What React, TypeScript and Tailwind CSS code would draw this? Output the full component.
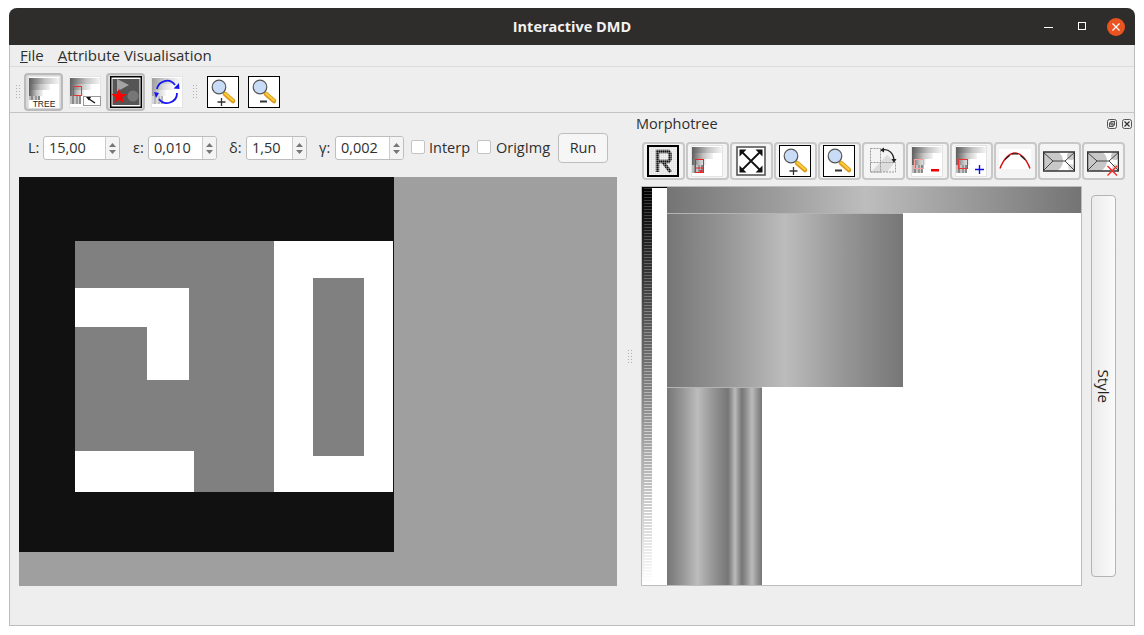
import React from "react";

const font = "font-['Open_Sans','Noto_Sans',sans-serif]";

// gradient stops used by the tree thumbnails and the big morphotree view
const G = ({ id, stops }: { id: string; stops: [number, string][] }) => (
  <linearGradient id={id} x1="0" y1="0" x2="1" y2="0">
    {stops.map(([o, c]) => (
      <stop key={o} offset={o} stopColor={c} />
    ))}
  </linearGradient>
);

function TreeThumb({ id, inner, faded }: { id: string; inner?: React.ReactNode; faded?: boolean }) {
  return (
    <g>
      <defs>
        <G id={id} stops={[[0, "#5e5e5e"], [0.55, "#c4c4c4"], [1, "#f4f4f4"]]} />
      </defs>
      <rect x="0" y="0" width="32" height="32" fill="#e4e4e4" />
      <rect x="1" y="1" width="30" height="30" fill="#fff" />
      <g opacity={faded ? 0.6 : 1}>
        <rect x="1" y="2" width="30" height="6" fill={`url(#${id})`} />
        <rect x="1" y="8" width="21" height="6" fill={`url(#${id})`} />
        <rect x="1" y="14" width="14" height="6" fill={`url(#${id})`} />
        <rect x="1" y="20" width="2" height="8" fill="#bbb" />
        <rect x="3" y="20" width="2" height="8" fill="#888" />
        <rect x="5" y="20" width="2" height="8" fill="#c4c4c4" />
        <rect x="7" y="20" width="2" height="8" fill="#999" />
        <rect x="9" y="20" width="1" height="8" fill="#ccc" />
        <rect x="10" y="20" width="2" height="8" fill="#888" />
      </g>
      {inner}
    </g>
  );
}

function Magnifier({ sign }: { sign: "+" | "-" }) {
  return (
    <svg width="32" height="32" viewBox="0 0 32 32">
      <rect x="0.5" y="0.5" width="31" height="31" fill="#fff" stroke="#000" />
      <line x1="18" y1="18" x2="26" y2="25" stroke="#dd9a1c" strokeWidth="4.5" strokeLinecap="round" />
      <line x1="18" y1="17.5" x2="26" y2="24.5" stroke="#fbd040" strokeWidth="1.8" strokeLinecap="round" />
      <circle cx="12" cy="11" r="6.8" fill="#c8dcf8" stroke="#555" strokeWidth="1.2" />
      {sign === "+" ? (
        <path d="M10.5 26h8M14.5 22v8" stroke="#333" strokeWidth="1.3" />
      ) : (
        <path d="M12 25.5h7" stroke="#333" strokeWidth="2" />
      )}
    </svg>
  );
}

function TreeIcon() {
  return (
    <svg width="32" height="32" viewBox="0 0 32 32">
      <TreeThumb id="t1" />
      <rect x="1" y="24" width="30" height="8" fill="#fff" />
      <text x="16" y="31" textAnchor="middle" fontSize="8.5" fontFamily="Liberation Sans" fill="#222">TREE</text>
    </svg>
  );
}

function TreeSelectIcon() {
  return (
    <svg width="32" height="32" viewBox="0 0 32 32">
      <TreeThumb id="t2" inner={<rect x="4.5" y="10.5" width="8" height="9" fill="none" stroke="#e33" />} />
      <rect x="14.5" y="20.5" width="17" height="9" fill="#fff" stroke="#999" />
      <path d="M20 23l6 4" stroke="#111" strokeWidth="1.3" />
      <path d="M17 21l5 0-2 3.5z" fill="#111" />
    </svg>
  );
}

function ImageStarIcon() {
  return (
    <svg width="32" height="32" viewBox="0 0 32 32">
      <rect x="0.75" y="0.75" width="30.5" height="30.5" fill="#fff" stroke="#000" strokeWidth="1.5" />
      <rect x="2.5" y="3" width="27" height="26" fill="#555" />
      <path d="M7 3l12 6-12 6.5z" fill="#a4a4a4" />
      <circle cx="23" cy="20" r="5.5" fill="#777" />
      <path d="M9 12.5l2 5.5 6 0-4.8 3.5 1.8 5.7-5-3.5-5 3.5 1.8-5.7-4.8-3.5 6 0z" fill="#f00" />
    </svg>
  );
}

function RefreshIcon() {
  return (
    <svg width="32" height="32" viewBox="0 0 32 32">
      <TreeThumb id="t3" faded />
      <path d="M6 13A10 10 0 0 1 24 9M26 17A10 10 0 0 1 8 23" fill="none" stroke="#1414f0" strokeWidth="1.8" />
      <path d="M22.5 12.5l6 .5-.5-6zM3 16l5 1-3 5z" fill="#1414f0" />
    </svg>
  );
}

function RIcon() {
  return (
    <svg width="32" height="32" viewBox="0 0 32 32">
      <defs>
        <pattern id="grid" width="2" height="2" patternUnits="userSpaceOnUse">
          <rect x="1" width="1" height="2" fill="#fff" opacity="0.3" />
          <rect y="1" width="2" height="1" fill="#fff" opacity="0.3" />
        </pattern>
      </defs>
      <rect x="1" y="1" width="30" height="30" fill="#e2e2e2" />
      <path d="M10.5 27V6.5h11l1.5 2v6l-1.5 2H11M16 17l7.5 10" fill="none" stroke="#111" strokeWidth="3.4" />
      <rect x="1" y="1" width="30" height="30" fill="url(#grid)" stroke="#000" strokeWidth="2" />
    </svg>
  );
}

function PathIcon() {
  return (
    <svg width="32" height="32" viewBox="0 0 32 32">
      <TreeThumb id="t4" inner={<rect x="4.5" y="14.5" width="8" height="13" fill="none" stroke="#e22" />} />
      <path d="M5 23h7" stroke="#e22" />
      <path d="M8 25h4l-2 3z" fill="#e22" />
    </svg>
  );
}

function FitIcon() {
  return (
    <svg width="32" height="32" viewBox="0 0 32 32">
      <rect x="2" y="2" width="28" height="28" fill="#fff" stroke="#555" strokeWidth="1.6" />
      <path d="M6 6l20 20M26 6L6 26" stroke="#111" strokeWidth="1.8" />
      <path d="M4.5 4.5h7l-7 7zM27.5 4.5h-7l7 7zM4.5 27.5h7l-7-7zM27.5 27.5h-7l7-7z" fill="#111" />
    </svg>
  );
}

function RotateIcon() {
  return (
    <svg width="32" height="32" viewBox="0 0 32 32">
      <path d="M5 26L20 10l8 7-8 10H12z" fill="#dcdcdc" />
      <path d="M3.5 3.5h10v23.5h-10zM3.5 17.5h25v9.5h-25z" fill="none" stroke="#999" strokeDasharray="2 1" />
      <path d="M15 5C22 3 27 9 27 16" fill="none" stroke="#222" strokeWidth="1.4" />
      <path d="M13 5l4-2.5v5zM27 18l-2.5-4h5z" fill="#222" />
    </svg>
  );
}

function TreeMarkIcon({ id, color }: { id: string; color: "red" | "blue" }) {
  return (
    <svg width="32" height="32" viewBox="0 0 32 32">
      <TreeThumb id={id} inner={<rect x="3.5" y="14.5" width="9" height="9" fill="none" stroke={color === "red" ? "#f9a0a0" : "#e33"} />} />
      {color === "red" ? (
        <rect x="20" y="24" width="8" height="2.5" fill="#e00" />
      ) : (
        <path d="M20 24.5h9M24.5 20v9" stroke="#11d" strokeWidth="1.4" />
      )}
    </svg>
  );
}

function CurveIcon() {
  return (
    <svg width="32" height="32" viewBox="0 0 32 32">
      <rect x="0" y="4" width="32" height="20" fill="#fff" />
      <path d="M1 23.5C5 13 11 8 16 8s11 5 15 15.5" fill="none" stroke="#d41414" strokeWidth="1.5" />
      <path d="M6 14.5L10.5 10.5M13 8.8L19 8.8M21.5 10.5L26 14.5" fill="none" stroke="#222" strokeWidth="1.3" />
    </svg>
  );
}

function EnvelopeIcon({ id, cross }: { id: string; cross?: boolean }) {
  return (
    <svg width="32" height="32" viewBox="0 0 32 32">
      <clipPath id={id}>
        <rect x="0" y="7" width="32" height="19" />
      </clipPath>
      <rect x="0" y="7" width="32" height="19" fill="#fff" />
      <g clipPath={`url(#${id})`}>
        <circle cx="9" cy="16" r="11" fill="#c8c8c8" />
        <circle cx="28" cy="11" r="4" fill="#c8c8c8" />
        <circle cx="28" cy="22" r="3" fill="#ddd" />
      </g>
      <path d="M0 7l10 9-10 10M10 16h12M32 7l-10 9 10 10" fill="none" stroke="#444" strokeWidth="1" />
      <rect x="0.5" y="7" width="31" height="19" fill="none" stroke="#333" strokeWidth="1.5" />
      {cross && <path d="M20.5 21l9.5 9.5M30 21l-9.5 9.5" stroke="#f22" strokeWidth="1.4" />}
    </svg>
  );
}

function ToolButton({ checked, children }: { checked?: boolean; children: React.ReactNode }) {
  return (
    <div className="w-[41px] flex justify-center">
      <div className={`w-[39px] h-[38px] flex items-center justify-center rounded-[4px] border-2 ${checked ? "bg-[#dadada] border-[#bbbbbb]" : "border-transparent"}`}>
        {children}
      </div>
    </div>
  );
}

function DockButton({ children }: { children: React.ReactNode }) {
  return (
    <div className="w-11 flex justify-center shrink-0">
      <div className="w-[43px] h-[38px] flex items-center justify-center rounded-[4px] border-2 border-[#c8c8c8] bg-[#f4f4f4]">
        {children}
      </div>
    </div>
  );
}

function Grip({ className }: { className: string }) {
  return <div className={`w-[5px] h-4 bg-[radial-gradient(#b0b0b0_0.7px,transparent_0.9px)] bg-[length:3px_3px] ${className}`} />;
}

function Spin({ label, labelWidth, value, width }: { label: string; labelWidth: string; value: string; width: string }) {
  return (
    <div className="flex items-center">
      <span className={`text-[14.5px] ${labelWidth}`}>{label}</span>
      <div className={`h-6 ${width} flex items-center bg-white border border-[#bdbdbd] rounded-[3px]`}>
        <span className="flex-1 pl-[5px] text-[14.5px]">{value}</span>
        <div className="w-[14px] h-full flex flex-col items-center justify-center gap-[3px] bg-[#f4f4f4] border-l border-[#ccc] rounded-r-[3px]">
          <svg width="7" height="4" viewBox="0 0 7 4"><path d="M3.5 0L7 4H0z" fill="#777" /></svg>
          <svg width="7" height="4" viewBox="0 0 7 4"><path d="M3.5 4L7 0H0z" fill="#777" /></svg>
        </div>
      </div>
    </div>
  );
}

function Check({ label, className }: { label: string; className: string }) {
  return (
    <div className="flex items-center">
      <div className="w-[14px] h-[14px] -mt-[2px] bg-white border border-[#c4c4c4] rounded-[2px]" />
      <span className={`text-[14.5px] whitespace-nowrap ${className}`}>{label}</span>
    </div>
  );
}

function ImageView() {
  return (
    <svg className="block" width="598" height="409" viewBox="0 0 598 409">
      <rect width="598" height="409" fill="#9f9f9f" />
      <rect width="375" height="375" fill="#111" />
      <rect x="56" y="64" width="318" height="251" fill="#808080" />
      <rect x="255" y="64" width="119" height="251" fill="#fff" />
      <rect x="294" y="101" width="51" height="178" fill="#808080" />
      <path d="M56 111h114v92h-42v-53H56z" fill="#fff" />
      <rect x="56" y="274" width="119" height="41" fill="#fff" />
    </svg>
  );
}

const rows = Array.from({ length: 133 }, (_, i) => i);

function TreeView() {
  const bump: [number, string][] = [[0, "#767676"], [0.25, "#969696"], [0.5, "#bcbcbc"], [0.75, "#969696"], [1, "#767676"]];
  return (
    <svg className="block" width="439" height="398" viewBox="0 0 439 398">
      <defs>
        <G id="bar" stops={[[0, "#747474"], [0.48, "#bdbdbd"], [1, "#747474"]]} />
        <G id="big" stops={bump} />
      </defs>
      <rect width="439" height="398" fill="#fff" />
      {rows.map((i) => {
        const v = Math.round((i / 132) * 255);
        const s = Math.min(255, v + 50);
        return (
          <g key={i}>
            <rect x="0" y={i * 3} width="10" height="3" fill={`rgb(${v},${v},${v})`} />
            <rect x="2" y={i * 3 + 1} width="8" height="1" fill={`rgb(${s},${s},${s})`} />
          </g>
        );
      })}
      <rect x="10" width="15" height="1" fill="#000" />
      <rect x="25" width="414" height="26" fill="url(#bar)" />
      <rect x="25" y="26" width="236" height="1" fill="#b4b4b4" />
      <rect x="25" y="27" width="236" height="173" fill="url(#big)" />
      <rect x="25" y="200" width="95" height="1" fill="#b4b4b4" />
      <rect x="25" y="201" width="61" height="197" fill="url(#big)" />
      <rect x="86" y="201" width="14" height="197" fill="url(#big)" />
      <rect x="100" y="201" width="20" height="197" fill="url(#big)" />
    </svg>
  );
}

export default function App() {
  return (
    <div className={`w-[1144px] h-[635px] bg-white pt-2 pl-[9px] pr-[9px] pb-[9px] text-[#2f2f2f] ${font}`}>
      <div className="h-full flex flex-col bg-[#eeeeee] border-x border-b border-[#bdbdbd] rounded-t-[8px]">
        <div className="h-[37px] -mx-px shrink-0 flex items-center justify-center rounded-t-[8px] bg-[#2f2d2c] text-[#f2f2f2] relative">
          <div className="font-bold text-[14.5px]">Interactive DMD</div>
          <div className="absolute right-[10px] top-0 h-full flex items-center">
            <div className="w-[9px] h-px bg-white mt-[2px]" />
            <div className="w-2 h-2 border border-white ml-[25px] -mt-[1px]" />
            <div className="w-[18px] h-[18px] ml-[21px] rounded-full bg-[#e95420] flex items-center justify-center">
              <svg width="10" height="10" viewBox="0 0 10 10"><path d="M1.5 1.5l7 7M8.5 1.5l-7 7" stroke="#fff" strokeWidth="1.2" /></svg>
            </div>
          </div>
        </div>

        <div className="h-[22px] shrink-0 flex items-center gap-[14px] px-[10px] text-[15px] border-b border-[#dcdcdc]">
          <span><span className="underline">F</span>ile</span>
          <span><span className="underline">A</span>ttribute Visualisation</span>
        </div>

        <div className="h-[46px] shrink-0 flex items-center pt-[4px] pl-[5px] border-b border-[#c4c4c4]">
          <Grip className="mr-[3px]" />
          <ToolButton checked><TreeIcon /></ToolButton>
          <ToolButton><TreeSelectIcon /></ToolButton>
          <ToolButton checked><ImageStarIcon /></ToolButton>
          <ToolButton><RefreshIcon /></ToolButton>
          <Grip className="mx-[5px]" />
          <ToolButton><Magnifier sign="+" /></ToolButton>
          <ToolButton><Magnifier sign="-" /></ToolButton>
        </div>

        <div className="flex-1 flex min-h-0">
          <div className="w-[608px] shrink-0 pl-[9px] pt-[19px]">
            <div className="h-[32px] flex items-center pl-[9px]">
              <Spin label="L:" labelWidth="w-[15px]" value="15,00" width="w-[77px]" />
              <div className="w-[13px]" />
              <Spin label="ε:" labelWidth="w-[15px]" value="0,010" width="w-[69px]" />
              <div className="w-[12px]" />
              <Spin label="δ:" labelWidth="w-[17px]" value="1,50" width="w-[61px]" />
              <div className="w-[12px]" />
              <Spin label="γ:" labelWidth="w-[16px]" value="0,002" width="w-[69px]" />
              <div className="w-[7px]" />
              <Check label="Interp" className="w-[41px] ml-[4px]" />
              <div className="w-[7px]" />
              <Check label="OrigImg" className="w-[56px] ml-[5px]" />
              <div className="w-[6px]" />
              <div className="w-[50px] h-[30px] flex items-center justify-center rounded-[4px] border border-[#bdbdbd] bg-[#f6f6f6] text-[14.5px]">Run</div>
            </div>
            <div className="mt-[13px]"><ImageView /></div>
          </div>

          <div className="w-[23px] shrink-0 flex items-center justify-center pb-[24px]">
            <Grip className="" />
          </div>

          <div className="flex-1 min-w-0 pr-[9px]">
            <div className="h-[22px] flex items-center justify-between -ml-[5px] -mr-[7px] text-[14.5px]">
              <span>Morphotree</span>
              <div className="flex gap-[5px]">
                <svg width="10" height="10" viewBox="0 0 10 10">
                  <rect x="0.5" y="0.5" width="9" height="9" rx="2" fill="none" stroke="#555" />
                  <rect x="4" y="2.5" width="3.5" height="3.5" fill="none" stroke="#555" />
                  <rect x="2.5" y="4" width="3.5" height="3.5" fill="none" stroke="#555" />
                </svg>
                <svg width="10" height="10" viewBox="0 0 10 10">
                  <rect x="0.5" y="0.5" width="9" height="9" rx="2" fill="none" stroke="#555" />
                  <path d="M2.5 2.5l5 5M7.5 2.5l-5 5" stroke="#333" strokeWidth="1.3" />
                </svg>
              </div>
            </div>
            <div className="flex mt-[7px]">
              <DockButton><RIcon /></DockButton>
              <DockButton><PathIcon /></DockButton>
              <DockButton><FitIcon /></DockButton>
              <DockButton><Magnifier sign="+" /></DockButton>
              <DockButton><Magnifier sign="-" /></DockButton>
              <DockButton><RotateIcon /></DockButton>
              <DockButton><TreeMarkIcon id="t5" color="red" /></DockButton>
              <DockButton><TreeMarkIcon id="t6" color="blue" /></DockButton>
              <DockButton><CurveIcon /></DockButton>
              <DockButton><EnvelopeIcon id="e1" /></DockButton>
              <DockButton><EnvelopeIcon id="e2" cross /></DockButton>
            </div>
            <div className="flex mt-[6px] gap-[9px]">
              <div className="border border-[#bdbdbd]"><TreeView /></div>
              <div className="w-[25px] h-[382px] mt-[9px] border border-[#b4b4b4] rounded-[4px] bg-gradient-to-r from-[#ebebeb] to-[#fafafa] flex items-center justify-center">
                <span className="rotate-90 text-[15px] text-[#222]">Style</span>
              </div>
            </div>
          </div>
        </div>
      </div>
    </div>
  );
}
